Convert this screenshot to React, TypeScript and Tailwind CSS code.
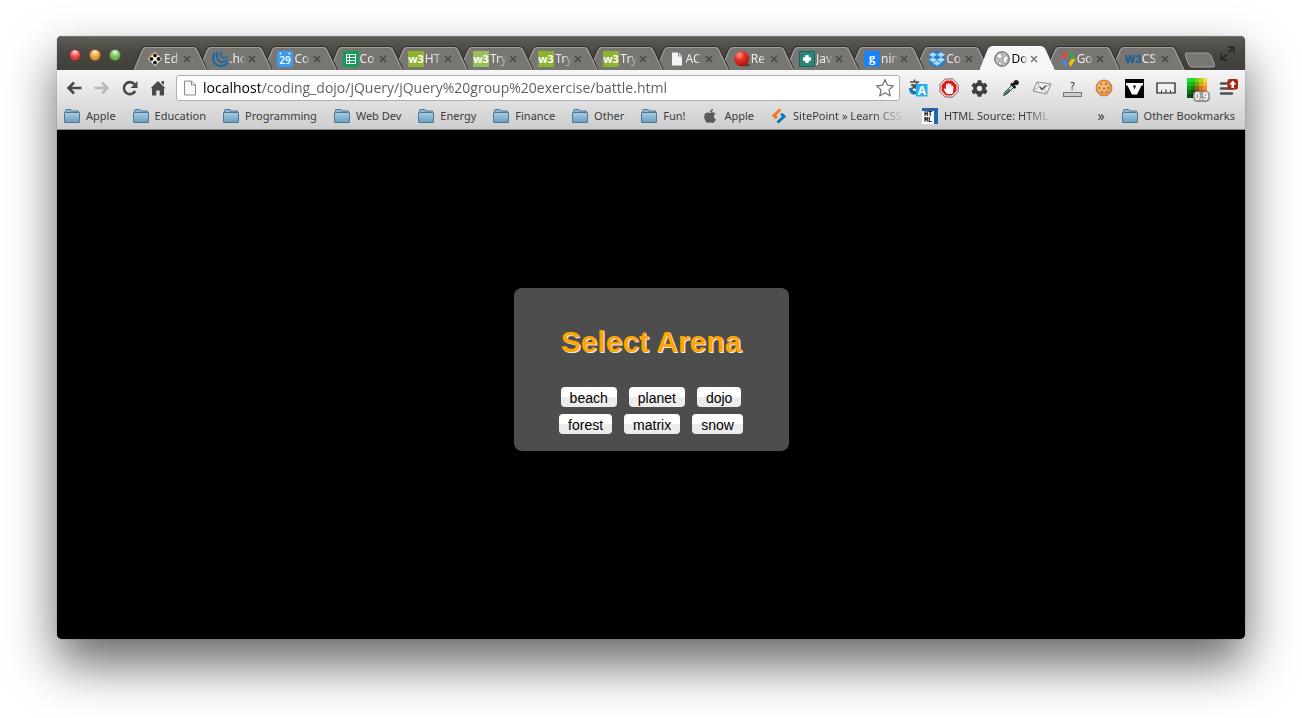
import type { ReactNode } from "react";
import { FaApple, FaCog, FaDropbox, FaHandPaper } from "react-icons/fa";

/* ---------- favicons ---------- */

const svg16 = "block h-4 w-4 shrink-0";

const DotsIcon = () => (
  <svg viewBox="0 0 16 16" className={svg16}>
    <path d="M8 1l7 7-7 7-7-7z" fill="#f4efe6" />
    <g fill="#1f1813">
      <circle cx="8" cy="4.400" r="1.900" />
      <circle cx="8" cy="11.600" r="1.900" />
      <circle cx="4.400" cy="8" r="1.900" />
      <circle cx="11.600" cy="8" r="1.900" />
    </g>
    <path d="M2.500 6L6 2.300" stroke="#e09a3c" strokeWidth="1.300" />
  </svg>
);

const JqueryIcon = () => (
  <svg viewBox="0 0 16 16" className={svg16}>
    <g fill="none" stroke="#1369a8" strokeLinecap="round">
      <path d="M2.300 2.500C-.5 7 1.500 15 9 15c3 0 5-1.200 6.300-3" strokeWidth="2" />
      <path d="M5.500 1.500C3.500 5 5.500 11 10.500 11c2 0 3.500-.8 4.500-2" strokeWidth="1.800" />
      <path d="M9 1C7.800 3.500 9 7 12 7c1.300 0 2.300-.5 3-1.200" strokeWidth="1.600" />
    </g>
  </svg>
);

const CalendarIcon = () => (
  <svg viewBox="0 0 16 16" className={svg16}>
    <rect width="16" height="16" rx="1.500" fill="#3a9bf0" />
    <circle cx="3.500" cy="2.500" r="0.900" fill="#fff" />
    <circle cx="12.500" cy="2.500" r="0.900" fill="#fff" />
    <text x="8" y="13" textAnchor="middle" fontSize="10" fill="#fff" fontFamily="Open Sans, sans-serif" fontWeight="600">29</text>
  </svg>
);

const SheetIcon = () => (
  <svg viewBox="0 0 16 16" className={svg16}>
    <rect width="16" height="16" rx="1" fill="#0f9d58" />
    <path d="M3.500 3.500h9v9h-9zM3.500 6.500h9M3.500 9.500h9M6.500 3.500v9" fill="none" stroke="#fff" />
  </svg>
);

const SchoolIcon = ({ fill = "#8cb22e" }: { fill?: string }) => (
  <svg viewBox="0 0 16 16" className={svg16}>
    <rect width="16" height="16" fill={fill} />
    <text x="8" y="12" textAnchor="middle" fontSize="11" fill="#fff" fontFamily="Open Sans, sans-serif" fontWeight="700">w3</text>
  </svg>
);

const TryIcon = () => <SchoolIcon fill="#98bf5c" />;

const PageIcon = () => (
  <svg viewBox="0 0 16 16" className={svg16}>
    <path d="M3 1.500h6.500L13 5v9.500H3z" fill="#f3f3f3" />
    <path d="M9.500 1.500V5H13" fill="none" stroke="#8a8a8a" />
  </svg>
);

const RedBallIcon = () => (
  <svg viewBox="0 0 16 16" className={svg16}>
    <defs>
      <radialGradient id="redball" cx="0.350" cy="0.250" r="0.800">
        <stop offset="0" stopColor="#ff9a8a" />
        <stop offset="0.400" stopColor="#ea3325" />
        <stop offset="1" stopColor="#a31108" />
      </radialGradient>
    </defs>
    <ellipse cx="11" cy="14" rx="5" ry="1.500" fill="#4c4a48" />
    <circle cx="7.700" cy="7.800" r="7.500" fill="url(#redball)" />
  </svg>
);

const PlusIcon = () => (
  <svg viewBox="0 0 16 16" className={svg16}>
    <rect x="0.500" y="0.500" width="15" height="15" fill="#2a8478" stroke="#14665c" />
    <path d="M6.300 4h3.400v2.300H12v3.400H9.700V12H6.300V9.700H4V6.300h2.300z" fill="#fff" />
  </svg>
);

const GoogleIcon = () => (
  <svg viewBox="0 0 16 16" className={svg16}>
    <rect width="16" height="16" rx="1" fill="#1a82f7" />
    <text x="8" y="11" textAnchor="middle" fontSize="13" fill="#fff" fontFamily="Liberation Serif, serif" fontWeight="700">g</text>
  </svg>
);

const DropboxIcon = () => (
  <span className="flex h-4 w-4 shrink-0 items-center justify-center rounded-md bg-[#2b7fc4]">
    <FaDropbox className="h-4 w-4 text-[#a8dcfa]" />
  </span>
);

const GlobeIcon = () => (
  <svg viewBox="0 0 16 16" className={svg16}>
    <circle cx="8" cy="8" r="7.300" fill="#c0c0c0" stroke="#5f5f5f" />
    <path d="M2.500 5C4 2.500 6.500 1.500 8 2l-1 2 1.500 1.500L6 8 3 7zM9 7l3-2.500 2.500 2L13 10l-2 3-1.500-2.500zM5 10l3 2-1 2.500-3-1.500z" fill="#fafafa" stroke="#777" strokeWidth="0.700" />
  </svg>
);

const DevelopersIcon = () => (
  <svg viewBox="0 0 16 16" className={svg16}>
    <path d="M5.500 0L.5 8h4L7.500 3.500z" fill="#e8453c" />
    <path d="M.5 8l5 8 2-3.500L4.500 8z" fill="#4387f5" />
    <path d="M10.500 0l5 8h-4L8.500 3.500z" fill="#2da94f" />
    <path d="M15.500 8l-5 8-2-3.500 3-4.500z" fill="#fdbd00" />
  </svg>
);

const ConsortiumIcon = () => (
  <svg viewBox="0 0 16 16" className={svg16}>
    <text x="8" y="12" textAnchor="middle" fontSize="11" fill="#0f5a9c" fontFamily="Liberation Sans, sans-serif" fontWeight="700">W3</text>
  </svg>
);

/* ---------- tab strip ---------- */

type TabInfo = { title: string; icon: () => ReactNode; active?: boolean };

const tabs: TabInfo[] = [
  { title: "Ed", icon: DotsIcon },
  { title: ".ho", icon: JqueryIcon },
  { title: "Co", icon: CalendarIcon },
  { title: "Co", icon: SheetIcon },
  { title: "HT", icon: SchoolIcon },
  { title: "Try", icon: TryIcon },
  { title: "Try", icon: SchoolIcon },
  { title: "Try", icon: SchoolIcon },
  { title: "AC", icon: PageIcon },
  { title: "Re", icon: RedBallIcon },
  { title: "Jav", icon: PlusIcon },
  { title: "nin", icon: GoogleIcon },
  { title: "Co", icon: DropboxIcon },
  { title: "Do", icon: GlobeIcon, active: true },
  { title: "Go", icon: DevelopersIcon },
  { title: "CS", icon: ConsortiumIcon },
];

function Tab({ tab, order }: { tab: TabInfo; order: number }) {
  const Icon = tab.icon;
  return (
    <div className="relative h-6 min-w-0 flex-1" style={{ zIndex: tab.active ? 50 : order }}>
      <svg viewBox="0 0 74 24" preserveAspectRatio="none" className="absolute top-0 left-0 h-6 w-[calc(100%+9px)]">
        <path
          d="M0 24L8 4Q9.500 .5 13 .5H60Q63.500 .5 65 4L74 24"
          fill={tab.active ? "#f6f6f6" : "#787673"}
          stroke={tab.active ? "#ffffff" : "#2f2e2b"}
          strokeWidth="1"
        />
        {!tab.active && (
          <path d="M1 24L9 5Q10.500 1.500 13 1.500H60Q62.500 1.500 64 5L73 24" fill="none" stroke="#a3a19e" />
        )}
      </svg>
      <div className="relative flex h-full items-center pt-0.5 pl-3.5">
        <Icon />
        <a
          href="#tab"
          className={`ml-px w-[17px] shrink-0 overflow-hidden whitespace-nowrap [mask-image:linear-gradient(to_right,#000_10px,transparent_17px)] ${tab.active ? "text-black" : "text-[#ececec]"}`}
        >
          {tab.title}
        </a>
        <button aria-label="Close tab" className="flex h-3 w-3 shrink-0 items-center justify-center">
          <svg viewBox="0 0 8 8" className="h-2 w-2">
            <path d="M1 1l6 6M7 1L1 7" stroke={tab.active ? "#6d6d6d" : "#484644"} strokeWidth="1.400" />
          </svg>
        </button>
      </div>
    </div>
  );
}

function TitleBar() {
  return (
    <div className="flex h-[34px] items-end border-t border-[#77766f] bg-linear-to-b from-[#5c5b56] via-[#474641] to-[#403f3b]">
      <div className="flex w-[76px] shrink-0 items-center gap-2 self-stretch pt-0.5 pl-3">
        <button aria-label="Close window" className="h-3 w-3 rounded-full border border-[#8d2a26] bg-[radial-gradient(circle_at_50%_20%,#ffe5e2_0%,#ee5a55_45%,#d63434_75%,#ff9d94_100%)]" />
        <button aria-label="Minimise window" className="h-3 w-3 rounded-full border border-[#8f5a20] bg-[radial-gradient(circle_at_50%_20%,#fff5de_0%,#f0a848_45%,#e0922f_75%,#ffe08a_100%)]" />
        <button aria-label="Zoom window" className="h-3 w-3 rounded-full border border-[#47762f] bg-[radial-gradient(circle_at_50%_20%,#f2ffea_0%,#86c560_45%,#69b047_75%,#c4f59a_100%)]" />
      </div>
      <div className="isolate flex min-w-0 flex-1 text-xs leading-4">
        {tabs.map((tab, i) => (
          <Tab key={i} tab={tab} order={tabs.length - i} />
        ))}
      </div>
      <div className="flex w-[69px] shrink-0 items-center self-stretch">
        <button aria-label="New tab" className="mt-3 ml-2 block">
          <svg viewBox="0 0 32 16" className="h-4 w-8">
            <path d="M3 1h20q3 0 4 2.500l3.500 9Q31 15 29 15H8q-2 0-3-2L1.500 4Q.5 1 3 1z" fill="#787673" stroke="#a3a19e" />
          </svg>
        </button>
        <button aria-label="Enter full screen" className="ml-1 block">
          <svg viewBox="0 0 15 15" className="h-[15px] w-[15px]" fill="none" stroke="#23221f" strokeWidth="1.500">
            <path d="M8.500 1.200h5.300v5.300M13.500 1.500L8.500 6.500" />
            <path d="M6.500 13.800H1.200V8.500M1.500 13.500l5-5" />
          </svg>
        </button>
      </div>
    </div>
  );
}

/* ---------- toolbar ---------- */

function NavButton({ label, children }: { label: string; children: ReactNode }) {
  return (
    <button aria-label={label} className="flex h-6 w-4 items-center justify-center">
      <svg viewBox="0 0 16 16" className="h-4 w-4">
        {children}
      </svg>
    </button>
  );
}

const paletteRows = [
  ["#14e048", "#2cd81e", "#6cd81c", "#b4d420", "#f0dc3a"],
  ["#0cc82c", "#2aac14", "#7aa414", "#d0a818", "#f8b830"],
  ["#0a9c22", "#247c0e", "#7a720e", "#d07c14", "#f88c24"],
  ["#087018", "#1c500a", "#6c3808", "#c84c0e", "#f0581a"],
  ["#065012", "#16300a", "#5a1c06", "#c0200c", "#e02e14"],
];

const extensions: { label: string; art: ReactNode }[] = [
  {
    label: "Translate",
    art: (
      <svg viewBox="0 0 20 20" className="h-5 w-5">
        <path d="M2 4h9M6.500 1.500V4M3 7h7M9 4c0 4-3 6-7 7M4 6c1 3 3 4 6 5" stroke="#4d4d4d" strokeWidth="1.600" fill="none" />
        <path d="M1 10c0 5 3 7 7 6.500v2l3-4-3-3.500v2c-2 .5-3.500-.5-4-3z" fill="#1577b8" />
        <rect x="8" y="6" width="11.500" height="12.500" fill="#24b0ef" />
        <text x="13.800" y="16.500" textAnchor="middle" fontSize="12" fontWeight="700" fill="#fff" fontFamily="Open Sans, sans-serif">A</text>
      </svg>
    ),
  },
  {
    label: "Block ads",
    art: (
      <span className="relative flex h-5 w-5 items-center justify-center">
        <svg viewBox="0 0 20 20" className="absolute h-5 w-5">
          <path d="M6.300 1h7.400L19 6.300v7.400L13.700 19H6.300L1 13.700V6.300z" fill="#fff" stroke="#6e2020" strokeWidth="0.800" />
          <path d="M6.900 2.500h6.200l4.400 4.400v6.200l-4.400 4.400H6.900l-4.400-4.400V6.900z" fill="#dc1a1a" />
        </svg>
        <FaHandPaper className="relative h-[11px] w-[11px] text-white" />
      </span>
    ),
  },
  { label: "Settings extension", art: <FaCog className="h-[17px] w-[17px] text-[#3f3f3f]" /> },
  {
    label: "Colour picker",
    art: (
      <svg viewBox="0 0 18 18" className="h-[18px] w-[18px]">
        <path d="M10 6L3 13l-1.500 3.500 3.500-1.500 7-7z" fill="#d7e5df" stroke="#38453f" />
        <path d="M7 10l-4 4-1 2.500 3-1.500 4-4z" fill="#35745c" />
        <path d="M9 4.500l4.500 4.500M11 6l3-3" stroke="#1d1d1d" strokeWidth="2.500" />
        <circle cx="14.200" cy="3.500" r="2.600" fill="#1d1d1d" />
      </svg>
    ),
  },
  {
    label: "Mail",
    art: (
      <svg viewBox="0 0 20 16" className="h-4 w-5">
        <path d="M5 2l14 2-4.500 10L1 11z" fill="#f2f2f2" stroke="#8a8a8a" />
        <path d="M5 2l4 7 10-5M1 11l6-4M14.500 14l-3-6" fill="none" stroke="#a4a4a4" />
        <path d="M8 7l2 2.500 4-4" fill="none" stroke="#555" strokeWidth="1.300" />
      </svg>
    ),
  },
  {
    label: "What font",
    art: (
      <span className="flex flex-col items-center">
        <span className="text-[10px] leading-3 text-[#222]">?</span>
        <span className="block h-[5px] w-[19px] border border-[#777] bg-[#c9cfcc]" />
      </span>
    ),
  },
  {
    label: "Cookies",
    art: (
      <svg viewBox="0 0 18 18" className="h-[18px] w-[18px]">
        <circle cx="9" cy="9" r="8" fill="#e79a4e" stroke="#c47a34" />
        <circle cx="8" cy="8" r="5.500" fill="#f3b674" />
        <g fill="#a8622c">
          <circle cx="6" cy="5" r="0.900" />
          <circle cx="11" cy="5" r="1" />
          <circle cx="4.500" cy="9" r="0.900" />
          <circle cx="9" cy="9.500" r="1" />
          <circle cx="13" cy="9" r="0.900" />
          <circle cx="7" cy="13" r="1" />
          <circle cx="11.500" cy="13" r="0.900" />
        </g>
      </svg>
    ),
  },
  {
    label: "Vector shapes",
    art: (
      <svg viewBox="0 0 19 19" className="h-[19px] w-[19px]">
        <rect width="19" height="19" fill="#050505" />
        <path d="M1 4h17v2.500h-1.500L12 15.500H7L2.500 6.500H1z" fill="#fff" />
        <path d="M8 6.500h3l-1.500 4z" fill="#050505" />
      </svg>
    ),
  },
  {
    label: "Ruler",
    art: (
      <svg viewBox="0 0 20 14" className="h-3.5 w-5">
        <path d="M1 2h18v10H1z" fill="#f2f2f2" stroke="#111" strokeWidth="1.200" />
        <path d="M5.500 11.500V9.500M10 11.500V8.500M14.500 11.500V9.500" stroke="#111" />
      </svg>
    ),
  },
  {
    label: "Palette",
    art: (
      <span className="relative block h-5 w-5">
        <svg viewBox="0 0 20 20" className="h-5 w-5">
          {paletteRows.map((row, y) =>
            row.map((fill, x) => <rect key={`${x}-${y}`} x={x * 4} y={y * 4} width="4" height="4" fill={fill} />),
          )}
        </svg>
        <span className="absolute top-[13px] left-1.5 rounded-sm border border-[#8b8b8b] bg-[#9c9c9c] px-px font-['Liberation_Sans',sans-serif] text-[10px] leading-[9px] font-bold text-white">0.9</span>
      </span>
    ),
  },
  {
    label: "Menu",
    art: (
      <svg viewBox="0 0 20 18" className="h-[18px] w-5">
        <path d="M3 4.500h11M3 9.500h12M3 14.500h11" stroke="#4f4f4f" strokeWidth="2.400" strokeLinecap="round" />
        <rect x="9.500" y="0" width="10.500" height="10.500" rx="2" fill="#a52714" />
        <path d="M14.750 1.500l3.500 4h-2.200V9h-2.600V5.500h-2.200z" fill="#fff" />
      </svg>
    ),
  },
];

function AddressRow() {
  return (
    <div className="flex h-9 items-center pr-0.5 pl-[9px]">
      <div className="flex shrink-0 gap-3">
        <NavButton label="Back">
          <path d="M15.500 8H3M8 2.500L2.500 8 8 13.500" fill="none" stroke="#4a4a4a" strokeWidth="2.600" />
        </NavButton>
        <NavButton label="Forward">
          <path d="M.5 8h12M8 2.500L13.500 8 8 13.500" fill="none" stroke="#b8b8b8" strokeWidth="2.400" />
        </NavButton>
        <NavButton label="Reload">
          <path d="M13.200 11A6 6 0 1 1 12.500 4.200" fill="none" stroke="#4a4a4a" strokeWidth="2.600" />
          <path d="M15.500 1v7H8.500z" fill="#4a4a4a" />
        </NavButton>
        <NavButton label="Home">
          <path d="M8 1l7.500 7.200H14V15.500H9.700V10.500H6.300v5H2V8.200H.5z" fill="#4a4a4a" />
          <path d="M11.500 1H14v4l-2.500-2.300z" fill="#4a4a4a" />
        </NavButton>
      </div>
      <label className="ml-2.5 flex h-[26px] min-w-0 flex-1 items-center rounded-[3px] border border-[#b0b0b0] bg-white pr-1 pl-1.5">
        <svg viewBox="0 0 14 16" className="h-4 w-3.5 shrink-0">
          <path d="M1.500 1h7l4 4v10h-11zM8.500 1v4h4" fill="#f8f8f8" stroke="#8b8b8b" />
        </svg>
        <input
          aria-label="Address"
          defaultValue="localhost/coding_dojo/jQuery/jQuery%20group%20exercise/battle.html"
          className="ml-1.5 min-w-0 flex-1 bg-[linear-gradient(to_right,#000_57px,#5c5c5c_57px)] bg-clip-text font-['Open_Sans',sans-serif] text-[14px] leading-5 text-transparent outline-none"
        />
        <button type="button" aria-label="Bookmark this page">
          <svg viewBox="0 0 20 20" className="h-5 w-5">
            <path d="M10 1.500l2.500 5.700 6 .6-4.600 4.100 1.400 6L10 14.800l-5.300 3.100 1.400-6L1.500 7.800l6-.6z" fill="#fff" stroke="#707070" strokeWidth="1.200" strokeLinejoin="round" />
          </svg>
        </button>
      </label>
      <div className="ml-0.5 flex shrink-0">
        {extensions.map((e) => (
          <button key={e.label} aria-label={e.label} className="flex h-6 w-[31px] items-center justify-center">
            {e.art}
          </button>
        ))}
      </div>
    </div>
  );
}

/* ---------- bookmarks ---------- */

const FolderIcon = () => (
  <svg viewBox="0 0 16 14" className="block h-3.5 w-4 shrink-0">
    <defs>
      <linearGradient id="folder" x1="0" y1="0" x2="0" y2="1">
        <stop offset="0" stopColor="#a9cce2" />
        <stop offset="1" stopColor="#6a9fc2" />
      </linearGradient>
    </defs>
    <path d="M1.500 3V1.500Q1.500 .5 2.500 .5h4q1 0 1 1V2h7v3h-13z" fill="#8fb9d3" stroke="#4d7691" />
    <rect x="0.500" y="3.500" width="15" height="10" rx="0.500" fill="url(#folder)" stroke="#4d7691" />
  </svg>
);

const AppleIcon = () => <FaApple className="block h-4 w-4 shrink-0 text-[#5b5b5b]" />;

const SitePointIcon = () => (
  <svg viewBox="0 0 16 16" className={svg16}>
    <path d="M8.500 0.500L.8 7.500l4 3.800 2-2-1.700-1.800L10.500 2.500z" fill="#f47421" />
    <path d="M7.500 15.500l7.700-7-4-3.800-2 2 1.700 1.800L5.500 13.500z" fill="#1272b8" />
  </svg>
);

const HtmlIcon = () => (
  <span className="block h-4 w-4 shrink-0 bg-[#2268a8] pt-[3px] pr-1">
    <span className="flex h-[13px] flex-col items-center bg-white font-['Liberation_Mono',monospace] text-[7px] leading-[6px] font-bold text-black">
      <span>HT</span>
      <span>ML</span>
    </span>
  </span>
);

const bookmarks: { label: string; icon: () => ReactNode; long?: boolean }[] = [
  { label: "Apple", icon: FolderIcon },
  { label: "Education", icon: FolderIcon },
  { label: "Programming", icon: FolderIcon },
  { label: "Web Dev", icon: FolderIcon },
  { label: "Energy", icon: FolderIcon },
  { label: "Finance", icon: FolderIcon },
  { label: "Other", icon: FolderIcon },
  { label: "Fun!", icon: FolderIcon },
  { label: "Apple", icon: AppleIcon },
  { label: "SitePoint » Learn CSS", icon: SitePointIcon, long: true },
  { label: "HTML Source: HTML", icon: HtmlIcon, long: true },
];

function BookmarksRow() {
  return (
    <nav aria-label="Bookmarks" className="flex h-[23px] items-center gap-[17px] pr-2.5 pb-1 pl-[7px] text-[11px] leading-4 whitespace-nowrap text-[#3c3c3c]">
      {bookmarks.map((b, i) => (
        <a key={i} href="#bookmark" className="flex shrink-0 items-center gap-1.5">
          <b.icon />
          <span className={b.long ? "w-[112px] overflow-hidden [mask-image:linear-gradient(to_right,#000_80px,transparent_112px)]" : ""}>
            {b.label}
          </span>
        </a>
      ))}
      <button aria-label="More bookmarks" className="ml-auto text-sm leading-4">»</button>
      <a href="#other" className="flex shrink-0 items-center gap-1.5">
        <FolderIcon />
        Other Bookmarks
      </a>
    </nav>
  );
}

/* ---------- page ---------- */

const arenas = ["beach", "planet", "dojo", "forest", "matrix", "snow"];

export default function App() {
  return (
    <div className="flex min-h-screen flex-col bg-white px-[57px] pt-9 pb-[79px] font-['Noto_Sans','Open_Sans',sans-serif]">
      <div className="flex flex-1 flex-col overflow-hidden rounded-[5px] bg-black shadow-[0_25px_50px_rgba(0,0,0,0.6),0_0_1px_rgba(0,0,0,0.6)]">
        <TitleBar />
        <header className="border-b border-[#8a8a8a] bg-linear-to-b from-[#f6f6f6] to-[#cdcdcd]">
          <AddressRow />
          <BookmarksRow />
        </header>
        <main className="flex flex-1 items-start justify-center pt-[158px] pb-8">
          <section className="w-[275px] rounded-lg bg-[#4d4d4d] px-10 pt-[37px] pb-[17px] font-['Liberation_Sans',Arial,sans-serif]">
            <h1 className="text-center text-[30px] leading-[34px] font-bold whitespace-nowrap text-[#ffa500] [text-shadow:1px_1px_0_#f5e6f5]">
              Select Arena
            </h1>
            <div className="mt-7 flex flex-wrap justify-center gap-x-3 gap-y-[7px]">
              {arenas.map((name) => (
                <button
                  key={name}
                  className="h-5 rounded-[4px] bg-linear-to-b from-white from-50% to-[#ececec] to-50% px-[9px] pt-0.5 text-sm leading-[18px] text-black"
                >
                  {name}
                </button>
              ))}
            </div>
          </section>
        </main>
      </div>
    </div>
  );
}
